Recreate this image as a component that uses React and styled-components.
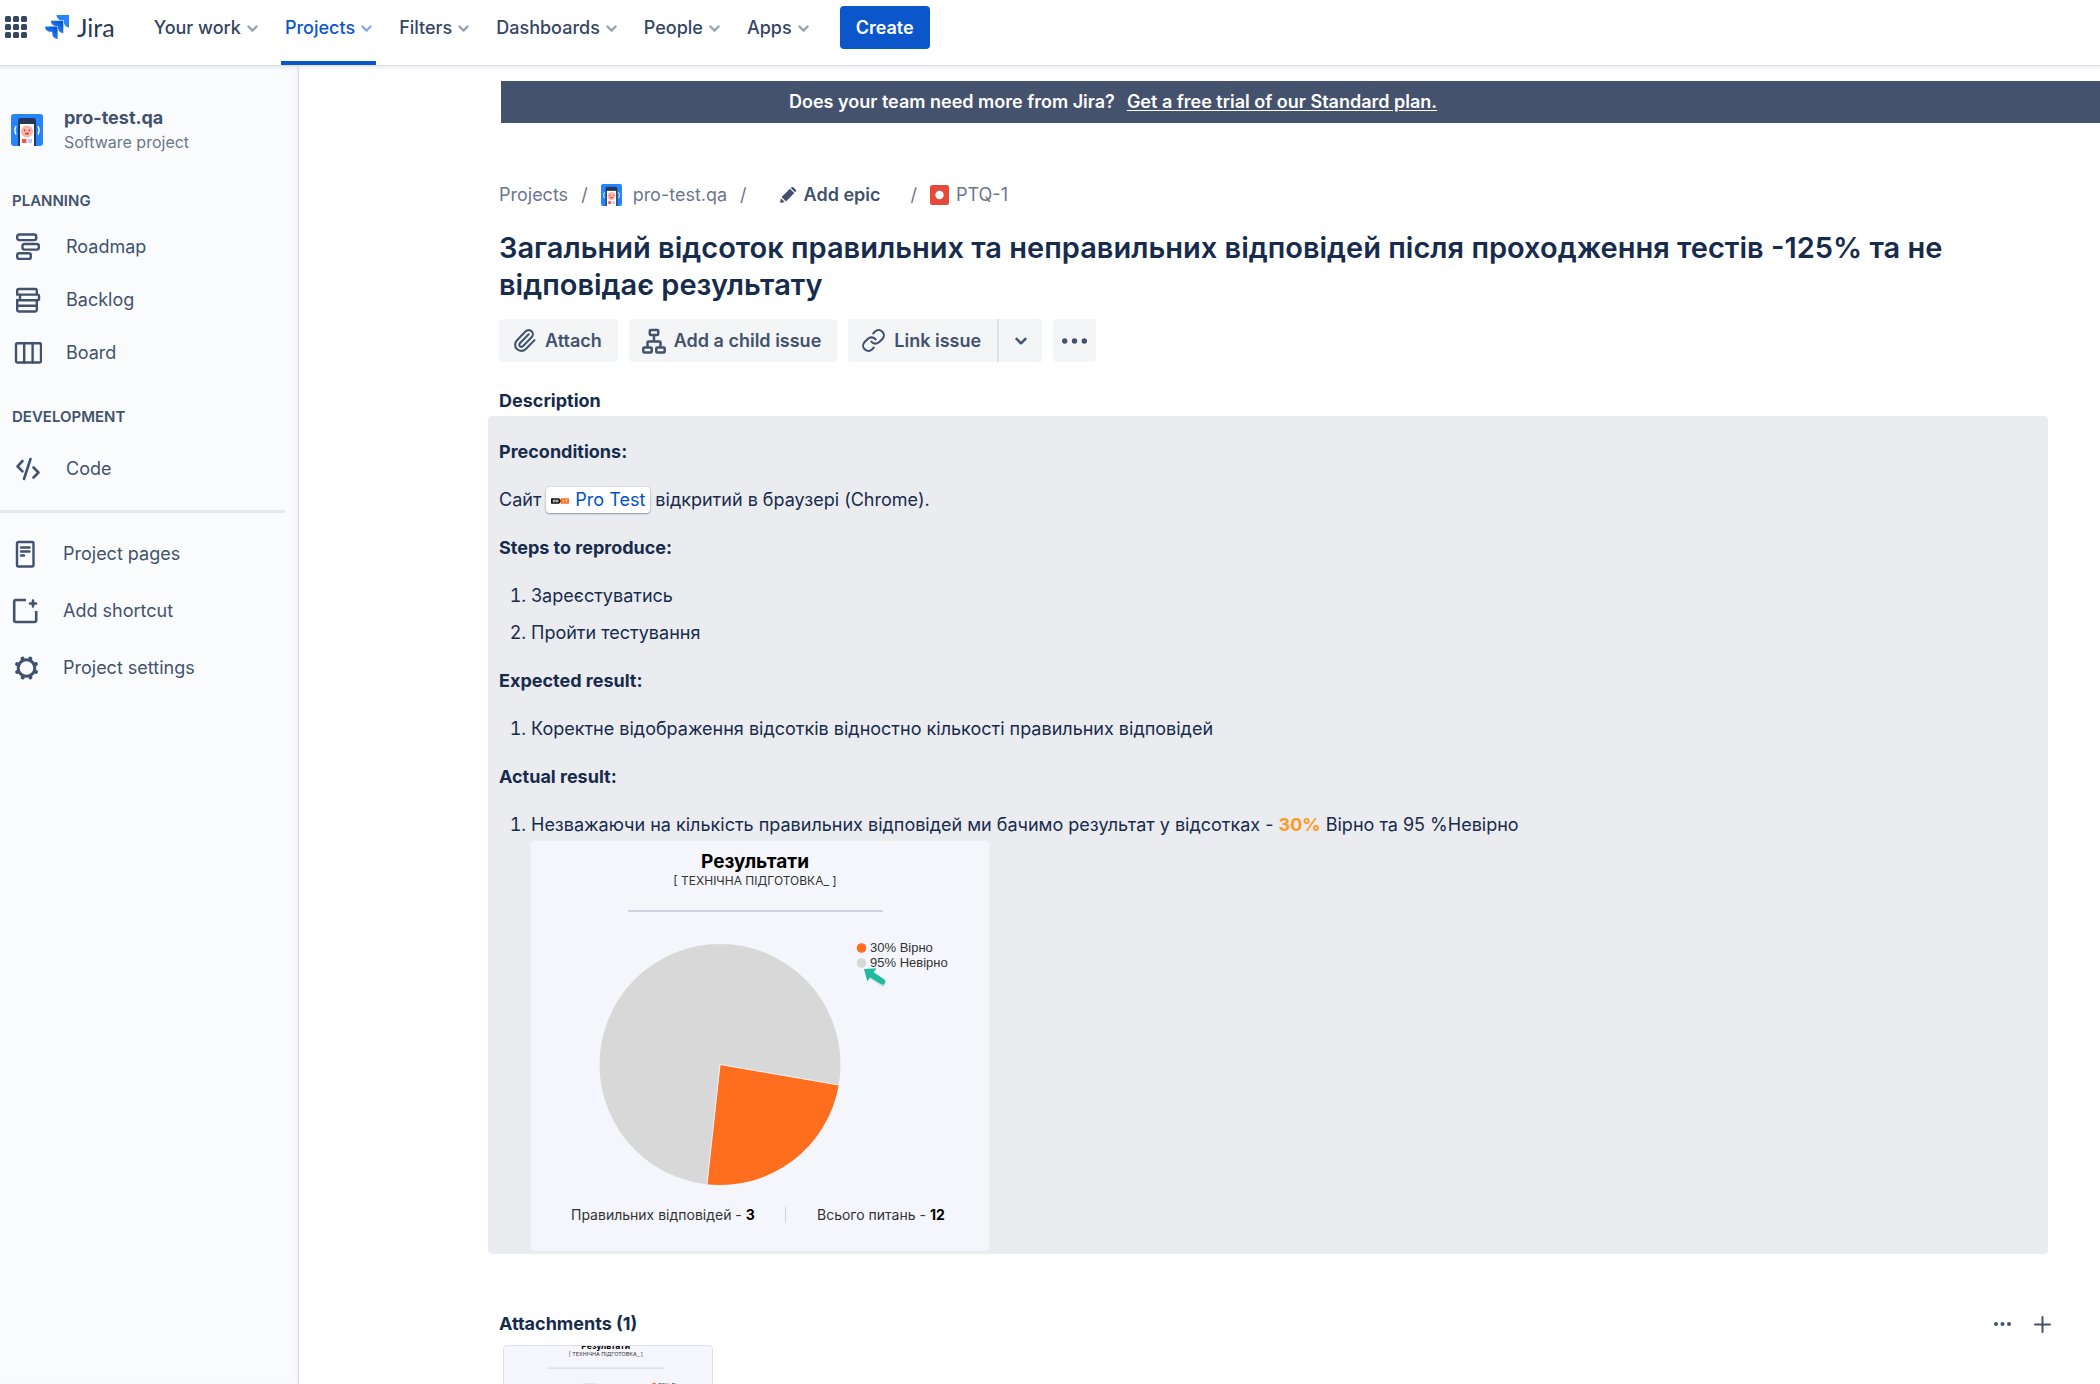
import React from "react";
import styled, { createGlobalStyle } from "styled-components";
import { Paperclip, Link as LinkIcon } from "lucide-react";

const color = {
  ink: "#172b4d",
  slate: "#42526e",
  muted: "#6b778c",
  blue: "#0c56cc",
  panel: "#ebecf0",
  button: "#f4f5f7",
};

const GlobalStyle = createGlobalStyle`
  * { box-sizing: border-box; }
  body {
    margin: 0;
    overflow: hidden;
    background: #fff;
    color: ${color.ink};
    font-family: Inter, "Noto Sans", sans-serif;
    font-size: 18px;
    line-height: 24px;
  }
  a { color: inherit; text-decoration: none; }
  button { font: inherit; color: inherit; border: 0; background: none; padding: 0; cursor: pointer; }
  svg { display: block; flex: none; }
`;

const Page = styled.div`
  display: flex;
  flex-direction: column;
  height: 100vh;
`;

/* ---------- top bar ---------- */

const TopBar = styled.header`
  position: relative;
  z-index: 1;
  flex: none;
  display: flex;
  align-items: stretch;
  height: 66px;
  padding-left: 5px;
  background: #fff;
  color: #344563;
  border-bottom: 1px solid #dcdfe5;
  box-shadow: 0 2px 4px rgba(9, 30, 66, 0.08);
`;

const BarSlot = styled.div`
  display: flex;
  align-items: center;
  padding-bottom: 11px;
`;

const Logo = styled.a`
  display: flex;
  align-items: center;
  gap: 8px;
  margin: 0 35px 0 18px;
  color: #253858;
  font-family: Lato, sans-serif;
  font-size: 25px;
`;

const NavList = styled.nav`
  display: flex;
  gap: 19px;
`;

const NavButton = styled.button`
  display: flex;
  align-items: center;
  gap: 6px;
  padding: 1px 4px 6px;
  font-weight: 500;
  color: ${(p) => (p.$active ? color.blue : "inherit")};
  border-bottom: 4px solid ${(p) => (p.$active ? color.blue : "transparent")};
  border-radius: 2px 2px 0 0;
  svg { opacity: 0.5; }
`;

const CreateButton = styled.button`
  height: 43px;
  margin-left: 27px;
  padding: 1px 16px 0;
  border-radius: 4px;
  background: ${color.blue};
  color: #fff;
  font-weight: 600;
`;

/* ---------- sidebar ---------- */

const Body = styled.div`
  flex: 1;
  min-height: 0;
  display: flex;
`;

const Sidebar = styled.aside`
  flex: none;
  width: 299px;
  padding-top: 40px;
  background: #fafbfc;
  color: ${color.slate};
  border-right: 1px solid #dfe1e6;
  box-shadow: inset -2px 0 2px rgba(9, 30, 66, 0.04);
`;

const ProjectHeader = styled.div`
  display: flex;
  align-items: center;
  gap: 21px;
  padding: 0 11px;
  height: 48px;
`;

const ProjectName = styled.div`
  font-weight: 700;
`;

const ProjectType = styled.div`
  font-size: 16px;
  color: ${color.muted};
`;

const GroupTitle = styled.h2`
  margin: 0;
  padding: ${(p) => (p.$first ? "35px 12px 7px" : "26px 12px 13px")};
  font-size: 15px;
  line-height: 24px;
  font-weight: 600;
`;

const SideLink = styled.a`
  display: flex;
  align-items: center;
  gap: ${(p) => (p.$loose ? "23px" : "24px")};
  height: ${(p) => (p.$loose ? "57px" : "53px")};
  padding-left: ${(p) => (p.$loose ? "12px" : "14px")};
`;

const Rule = styled.hr`
  height: 3px;
  margin: 15px 13px 12px 0;
  border: 0;
  background: #e6e8eb;
`;

/* ---------- main column ---------- */

const Main = styled.main`
  flex: 1;
  min-width: 0;
  overflow: hidden;
  padding-top: 15px;
`;

const Banner = styled.div`
  display: flex;
  align-items: center;
  gap: 12px;
  height: 42px;
  margin-left: 202px;
  padding-left: 288px;
  background: #44526d;
  color: #fff;
  font-weight: 600;
  a { text-decoration: underline; text-underline-offset: 2px; }
`;

const Content = styled.div`
  padding: 56px 48px 0 189px;
`;

const Intro = styled.section`
  padding-left: 11px;
`;

const Crumbs = styled.nav`
  display: flex;
  align-items: center;
  gap: 13px;
  height: 32px;
  color: ${color.muted};
`;

const Crumb = styled.a`
  display: flex;
  align-items: center;
  gap: ${(p) => (p.$tight ? "7px" : "11px")};
`;

const EpicButton = styled.button`
  display: flex;
  align-items: center;
  gap: 8px;
  padding: 0 17px 0 20px;
  color: ${color.slate};
  font-weight: 600;
`;

const Title = styled.h1`
  margin: 18px 0 16px;
  font-size: 29px;
  line-height: 37px;
  font-weight: 600;
`;

const Actions = styled.div`
  display: flex;
  gap: 11px;
`;

const Action = styled.button`
  display: flex;
  align-items: center;
  justify-content: center;
  gap: 8px;
  height: 43px;
  min-width: 43px;
  padding: 0 ${(p) => (p.$icon ? "8px" : "16px 0 13px")};
  border-radius: ${(p) => (p.$end ? "0 4px 4px 0" : p.$start ? "4px 0 0 4px" : "4px")};
  background: ${color.button};
  color: ${color.slate};
  font-weight: 600;
`;

const Split = styled.div`
  display: flex;
  gap: 2px;
  background: #dfe1e6;
  border-radius: 4px;
`;

const SectionTitle = styled.h2`
  margin: ${(p) => (p.$gap ? "27px 0 3px 11px" : "0")};
  font-size: 18px;
  line-height: 24px;
  font-weight: 700;
`;

const Panel = styled.section`
  display: flex;
  flex-direction: column;
  gap: 16px;
  margin-right: 4px;
  padding: 20px 11px 3px;
  border-radius: 4px;
  background: ${color.panel};
  line-height: 32px;
  h3, p, ol { margin: 0; font-size: 18px; }
  h3 { font-weight: 700; }
`;

const Steps = styled.ol`
  display: flex;
  flex-direction: column;
  gap: 5px;
  padding-left: 32px;
`;

const SmartLink = styled.a`
  padding: 2px 5px 3px;
  border-radius: 4px;
  background: #fff;
  box-shadow: 0 1px 2px rgba(9, 30, 66, 0.4), 0 0 1px rgba(9, 30, 66, 0.4);
  color: #0052cc;
  svg {
    display: inline-block;
    margin-right: 6px;
    vertical-align: middle;
  }
`;

const Percent = styled.strong`
  color: #ff991f;
  font-weight: 700;
`;

const Figure = styled.figure`
  width: 458px;
  max-width: 100%;
  margin: 0;
  border-radius: 4px;
  overflow: hidden;
  svg { width: 100%; height: auto; }
`;

const AttachHead = styled.div`
  display: flex;
  align-items: center;
  gap: 23px;
  height: 32px;
  margin: 54px 0 5px;
  padding: 0 1px 0 11px;
  color: ${color.slate};
  h2 { flex: 1; color: ${color.ink}; }
`;

const Thumb = styled.a`
  display: block;
  width: 210px;
  height: 169px;
  margin-left: 15px;
  border: 1px solid #dfe1e6;
  border-radius: 4px;
  background: #f5f6fb;
  overflow: hidden;
  svg { width: 100%; height: 100%; }
`;

/* ---------- drawings ---------- */

const Grid = () => (
  <svg width="22" height="22" viewBox="0 0 22 22" fill="currentColor">
    {[0, 8, 16].map((y) =>
      [0, 8, 16].map((x) => <rect key={x + "-" + y} x={x} y={y} width="6" height="6" rx="1.6" />)
    )}
  </svg>
);

const JiraMark = () => (
  <svg width="24" height="24" viewBox="0 0 24 24">
    <defs>
      <linearGradient id="jm" x1="1" y1="0" x2="0.3" y2="0.8">
        <stop offset="0.1" stopColor="#0052cc" />
        <stop offset="1" stopColor="#2684ff" />
      </linearGradient>
    </defs>
    <path fill="#2684ff" d="M11.5 0H24v12.6a5.6 5.6 0 0 1-5.1-5.6V5.3h-2.2A5.4 5.4 0 0 1 11.5 0z" />
    <path fill="url(#jm)" d="M5.8 5.7h12.5v12.6a5.5 5.5 0 0 1-5.3-5.5v-1.7h-2A5.4 5.4 0 0 1 5.8 5.7z" />
    <path fill="url(#jm)" d="M0 11.4h12.6V24a5.5 5.5 0 0 1-5.3-5.5v-1.7H5.3A5.4 5.4 0 0 1 0 11.4z" />
  </svg>
);

const Chevron = ({ size = 11 }) => (
  <svg width={size} height={size} viewBox="0 0 10 10" fill="none" stroke="currentColor" strokeWidth="2.1" strokeLinecap="round" strokeLinejoin="round">
    <path d="M1.3 3.2 5 6.9 8.7 3.2" />
  </svg>
);

const Avatar = ({ width, height }) => (
  <svg width={width} height={height} viewBox="0 0 32 32" preserveAspectRatio="none">
    <rect width="32" height="32" rx="3" fill="#2684ff" />
    <path d="M7 32V7a3 3 0 0 1 3-3h12a3 3 0 0 1 3 3v25z" fill="#253858" />
    <path d="M9 10h14v22H9z" fill="#fff" />
    <circle cx="16" cy="17.5" r="6" fill="#ffb3a6" />
    <circle cx="13.6" cy="16.3" r="0.7" fill="#253858" />
    <circle cx="18.4" cy="16.3" r="0.7" fill="#253858" />
    <path d="M14 18.8h4a2 2 0 0 1-4 0z" fill="#de350b" />
    <path d="M11 25h4.5v4H11z" fill="#ff5247" />
    <path d="M17 25h4v4h-4z" fill="#a9d0ff" />
    <path d="M4.8 12.5q-2 3.8 0 7.6M27.2 12.5q2 3.8 0 7.6" fill="none" stroke="#fff" strokeWidth="1.3" strokeLinecap="round" />
  </svg>
);

const Stroke = ({ children, w = 2 }) => (
  <svg width="28" height="28" viewBox="0 0 28 28" fill="none" stroke="currentColor" strokeWidth={w} strokeLinecap="round" strokeLinejoin="round">
    {children}
  </svg>
);

const RoadmapIcon = () => (
  <Stroke w={2.4}>
    <rect x="3.2" y="1.5" width="19" height="5.6" rx="2" />
    <rect x="8.5" y="11" width="16.3" height="5.6" rx="2" />
    <rect x="3.2" y="20.3" width="13.6" height="5.6" rx="2" />
  </Stroke>
);

const BacklogIcon = () => (
  <Stroke w={2.4}>
    <path d="M3.2 8V4.5A1.5 1.5 0 0 1 4.7 3h16.6a1.5 1.5 0 0 1 1.5 1.5V8M3.2 14v10.2A1.5 1.5 0 0 0 4.7 25.5h16.6a1.5 1.5 0 0 0 1.5-1.3V14M3.2 19.8h19.6" />
    <rect x="6" y="8.6" width="19" height="5.6" rx="1.5" />
    <path d="M3.2 8.6H6M3.2 14.2H6" />
  </Stroke>
);

const BoardIcon = () => (
  <Stroke w={2.4}>
    <rect x="2" y="4.2" width="25" height="19.3" rx="1.5" />
    <path d="M10.2 4v19.5M18.6 4v19.5" />
  </Stroke>
);

const CodeIcon = () => (
  <Stroke w={2.6}>
    <path d="M8.5 6 3.5 11.3l5 5M19.5 12.5l5 5-5 5M16.5 4 10 24" />
  </Stroke>
);

const PagesIcon = () => (
  <Stroke w={2.4}>
    <rect x="5" y="2" width="16.5" height="24.5" rx="1.5" />
    <path d="M9 7.5h8.5M9 11.5h8.5M9 15.5h3" />
  </Stroke>
);

const ShortcutIcon = () => (
  <Stroke w={2.6}>
    <path d="M14 3H3.7A1.5 1.5 0 0 0 2.2 4.5v19A1.5 1.5 0 0 0 3.7 25h19a1.5 1.5 0 0 0 1.5-1.5V14" strokeLinecap="butt" />
    <path d="M21 3.5v6M18 6.5h6" />
  </Stroke>
);

const SettingsIcon = () => (
  <Stroke w={3}>
    <circle cx="14.5" cy="14" r="8.3" />
    {[22, 67, 112, 157, 202, 247, 292, 337].map((a) => (
      <path key={a} d="M14.5 4.5V3.8" strokeWidth="4" transform={`rotate(${a} 14.5 14)`} />
    ))}
  </Stroke>
);

const PencilIcon = () => (
  <svg width="16" height="16" viewBox="0 0 16 16" fill="currentColor">
    <path d="M1.6 10 9.9 1.7l4.4 4.4L6 14.4zM.9 11.3l3.8 3.8-3.4.7a1 1 0 0 1-1.1-1.1zM10.7.9l.4-.4a1.7 1.7 0 0 1 2.4 0l2 2a1.7 1.7 0 0 1 0 2.4l-.4.4z" />
  </svg>
);

const BugIcon = () => (
  <svg width="19" height="20" viewBox="0 0 19 20">
    <rect width="19" height="20" rx="2.5" fill="#e5493a" />
    <circle cx="9.5" cy="10" r="4.2" fill="#fff" />
  </svg>
);

const ChildIcon = () => (
  <svg width="24" height="26" viewBox="0 0 24 26" fill="none" stroke="currentColor" strokeWidth="2.5" strokeLinejoin="round">
    <rect x="7.8" y="2" width="8.4" height="5" rx="1" />
    <rect x="1.3" y="19.5" width="8.4" height="5" rx="1" />
    <rect x="14.3" y="19.5" width="8.4" height="5" rx="1" />
    <path d="M12 7v6.5M5.5 19v-4.5a1 1 0 0 1 1-1h11a1 1 0 0 1 1 1V19" />
  </svg>
);

const Dots = ({ width, r }) => (
  <svg width={width} height="8" viewBox={`0 0 ${width} 8`} fill="currentColor">
    <circle cx={r} cy="4" r={r} />
    <circle cx={width / 2} cy="4" r={r} />
    <circle cx={width - r} cy="4" r={r} />
  </svg>
);

const PlusIcon = () => (
  <svg width="17" height="17" viewBox="0 0 17 17" stroke="currentColor" strokeWidth="2" strokeLinecap="round">
    <path d="M8.5 1v15M1 8.5h15" />
  </svg>
);

const SiteIcon = () => (
  <svg width="18" height="8" viewBox="0 0 19 8">
    <path d="M1 1h7.5L11 4 8.5 7H1a1 1 0 0 1-1-1V2a1 1 0 0 1 1-1z" fill="#111" />
    <path d="M11 1h7a1 1 0 0 1 1 1v4a1 1 0 0 1-1 1h-7a1 1 0 0 1-1-1V2a1 1 0 0 1 1-1z" fill="#ff6d1f" />
    <path d="M2.3 3h2v2h-2zM5.5 3h2v2h-2z" fill="none" stroke="#fff" strokeWidth="0.8" />
    <path d="M13 2.6v2.8M15 3h2.4M16.2 3v2.4" stroke="#fff" strokeWidth="0.8" />
  </svg>
);

const ChartText = styled.text`
  font-family: ${(p) => (p.$legend ? '"Liberation Sans", sans-serif' : "Inter, sans-serif")};
  font-size: ${(p) => p.$size}px;
  font-weight: ${(p) => (p.$bold ? 700 : 400)};
  fill: ${(p) => (p.$bold ? "#000" : "#333")};
  tspan { font-weight: 700; fill: #000; }
`;

const ResultChart = ({ cover }) => (
  <svg viewBox="0 0 458 410" preserveAspectRatio={cover ? "xMidYMid slice" : "xMidYMid meet"} role="img">
    <rect width="458" height="410" fill="#f5f6fb" />
    <ChartText x="224" y="27" textAnchor="middle" $size={19} $bold>Результати</ChartText>
    <ChartText x="224" y="44" textAnchor="middle" $size={12}>[ ТЕХНІЧНА ПІДГОТОВКА_ ]</ChartText>
    <path d="M97 70h255" stroke="#d0d3dd" strokeWidth="2" />
    <circle cx="189" cy="223.5" r="120.5" fill="#d8d8d8" />
    <path d="M189 223.5 307.7 244A120.5 120.5 0 0 1 176 343.3z" fill="#ff6d1f" />
    <path d="M307.7 244 189 223.5 176 343.3" fill="none" stroke="#f5f6fb" strokeWidth="1" />
    <circle cx="330.5" cy="107" r="4.8" fill="#ff6d1f" />
    <circle cx="330.5" cy="122" r="4.8" fill="#d8d8d8" />
    <ChartText x="339" y="111" $size={13} $legend>30% Вірно</ChartText>
    <ChartText x="339" y="126" $size={13} $legend>95% Невірно</ChartText>
    <path d="M339 135 352 143.5" stroke="#9aa6ac" strokeWidth="5" strokeLinecap="round" opacity="0.25" />
    <path d="M333 128 345.5 127.3 342.6 131.3 353.5 138.5A3 3 0 0 1 350 143.3L339 136.5 336.3 140.5z" fill="#1fbaa0" />
    {!cover && (
      <>
        <ChartText x="40" y="379" $size={14}>Правильних відповідей - <tspan>3</tspan></ChartText>
        <path d="M254.5 366v16" stroke="#d0d3dd" strokeWidth="1" />
        <ChartText x="286" y="379" $size={14}>Всього питань - <tspan>12</tspan></ChartText>
      </>
    )}
  </svg>
);

/* ---------- page ---------- */

const nav = ["Your work", "Projects", "Filters", "Dashboards", "People", "Apps"];

const planning = [
  ["Roadmap", RoadmapIcon],
  ["Backlog", BacklogIcon],
  ["Board", BoardIcon],
];

const shortcuts = [
  ["Project pages", PagesIcon],
  ["Add shortcut", ShortcutIcon],
  ["Project settings", SettingsIcon],
];

export default function App() {
  return (
    <Page>
      <GlobalStyle />
      <TopBar>
        <BarSlot>
          <button aria-label="Switch product"><Grid /></button>
          <Logo href="#"><JiraMark />Jira</Logo>
        </BarSlot>
        <NavList>
          {nav.map((label) => (
            <NavButton key={label} $active={label === "Projects"}>
              {label}
              <Chevron />
            </NavButton>
          ))}
        </NavList>
        <BarSlot>
          <CreateButton>Create</CreateButton>
        </BarSlot>
      </TopBar>
      <Body>
        <Sidebar>
          <ProjectHeader>
            <Avatar width={32} height={32} />
            <div>
              <ProjectName>pro-test.qa</ProjectName>
              <ProjectType>Software project</ProjectType>
            </div>
          </ProjectHeader>
          <GroupTitle $first>PLANNING</GroupTitle>
          {planning.map(([label, Icon]) => (
            <SideLink key={label} href="#"><Icon />{label}</SideLink>
          ))}
          <GroupTitle>DEVELOPMENT</GroupTitle>
          <SideLink href="#"><CodeIcon />Code</SideLink>
          <Rule />
          {shortcuts.map(([label, Icon]) => (
            <SideLink key={label} href="#" $loose><Icon />{label}</SideLink>
          ))}
        </Sidebar>
        <Main>
          <Banner>
            <span>Does your team need more from Jira?</span>
            <a href="#">Get a free trial of our Standard plan.</a>
          </Banner>
          <Content>
            <Intro>
              <Crumbs>
                <Crumb href="#">Projects</Crumb>
                <span>/</span>
                <Crumb href="#"><Avatar width={21} height={22} />pro-test.qa</Crumb>
                <span>/</span>
                <EpicButton><PencilIcon />Add epic</EpicButton>
                <span>/</span>
                <Crumb href="#" $tight><BugIcon />PTQ-1</Crumb>
              </Crumbs>
              <Title>
                Загальний відсоток правильних та неправильних відповідей після проходження тестів -125% та не відповідає результату
              </Title>
              <Actions>
                <Action><Paperclip size={25} />Attach</Action>
                <Action><ChildIcon />Add a child issue</Action>
                <Split>
                  <Action $start><LinkIcon size={25} />Link issue</Action>
                  <Action $icon $end aria-label="More link options"><Chevron size={12} /></Action>
                </Split>
                <Action $icon aria-label="More actions"><Dots width={25} r={2.7} /></Action>
              </Actions>
            </Intro>
            <SectionTitle $gap>Description</SectionTitle>
            <Panel>
              <h3>Preconditions:</h3>
              <p>
                Сайт <SmartLink href="#"><SiteIcon />Pro Test</SmartLink> відкритий в браузері (Chrome).
              </p>
              <h3>Steps to reproduce:</h3>
              <Steps>
                <li>Зареєстуватись</li>
                <li>Пройти тестування</li>
              </Steps>
              <h3>Expected result:</h3>
              <Steps>
                <li>Коректне відображення відсотків відностно кількості правильних відповідей</li>
              </Steps>
              <h3>Actual result:</h3>
              <Steps>
                <li>
                  Незважаючи на кількість правильних відповідей ми бачимо результат у відсотках - <Percent>30%</Percent> Вірно та 95 %Невірно
                  <Figure><ResultChart /></Figure>
                </li>
              </Steps>
            </Panel>
            <AttachHead>
              <SectionTitle>Attachments (1)</SectionTitle>
              <button aria-label="Attachment options"><Dots width={17} r={2} /></button>
              <button aria-label="Add attachment"><PlusIcon /></button>
            </AttachHead>
            <Thumb href="#" aria-label="Attachment"><ResultChart cover /></Thumb>
          </Content>
        </Main>
      </Body>
    </Page>
  );
}
